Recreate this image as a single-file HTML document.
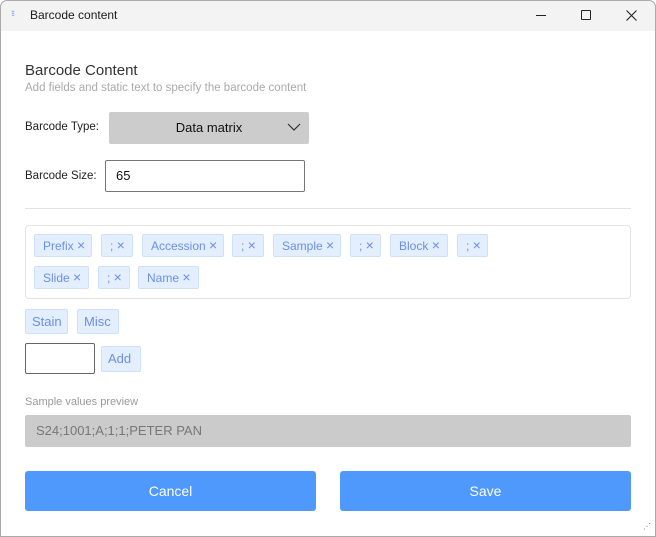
<!DOCTYPE html>
<html><head><style>
*{box-sizing:border-box;margin:0;padding:0}
body{width:656px;height:537px;background:#fff;font-family:"Liberation Sans",sans-serif;position:relative;overflow:hidden}
.brd{position:absolute;left:0;top:0;width:656px;height:537px;border:1px solid #aaa;border-radius:7px 7px 0 0;pointer-events:none}
.tb{position:absolute;left:0;top:0;width:100%;height:31px;background:#f3f3f3;border-radius:7px 7px 0 0}
.a{position:absolute;white-space:nowrap}
.chip{position:absolute;height:23px;background:#e3eefe;border:1px solid #cfe0fb;border-radius:2px;color:#6b8fe8;font-size:12px;line-height:21px;padding-left:8px}
.chip b{font-weight:normal;font-size:14px}
.btn{position:absolute;background:#4f98fc;border-radius:3px;color:#fff;font-size:14px;text-align:center;line-height:40px;height:40px;top:471px;width:291px}
</style></head><body>
<div class="tb"></div>
<div class="a" style="left:11px;top:10px;font-size:8px;color:#3a8ee8;line-height:8px;letter-spacing:-1px">⁝⁝</div>
<div class="a" style="left:30px;top:8px;font-size:12px;color:#1a1a1a">Barcode content</div>
<div class="a" style="left:536px;top:15px;width:10px;height:1px;background:#222"></div>
<div class="a" style="left:581px;top:10px;width:10px;height:10px;border:1px solid #222;border-radius:1px"></div>
<svg class="a" style="left:626px;top:10px" width="11" height="11"><path d="M0.5 0.5l10 10M10.5 0.5l-10 10" stroke="#222" stroke-width="1.1"/></svg>
<div class="a" style="left:25px;top:62px;font-size:15px;color:#333">Barcode Content</div>
<div class="a" style="left:25px;top:82px;font-size:11.5px;color:#aaa">Add fields and static text to specify the barcode content</div>
<div class="a" style="left:25px;top:121px;font-size:11.5px;color:#222">Barcode Type:</div>
<div class="a" style="left:109px;top:112px;width:200px;height:32px;background:#cccccc;border-radius:2px;font-size:13px;color:#111;text-align:center;line-height:32px">Data matrix</div>
<svg class="a" style="left:287px;top:123px" width="14" height="9"><path d="M1 1l6 6 6-6" stroke="#333" fill="none" stroke-width="1.2"/></svg>
<div class="a" style="left:25px;top:170px;font-size:11.5px;color:#222">Barcode Size:</div>
<div class="a" style="left:105px;top:160px;width:200px;height:32px;border:1px solid #777;border-radius:2px;font-size:13px;color:#111;line-height:30px;padding-left:10px">65</div>
<div class="a" style="left:25px;top:208px;width:606px;height:1px;background:#e2e2e2"></div>
<div class="a" style="left:25px;top:225px;width:606px;height:74px;border:1px solid #e3e3e3;border-radius:4px"></div>
<div class="chip" style="left:34px;top:234px;width:58px">Prefix <b>×</b></div>
<div class="chip" style="left:101px;top:234px;width:32px">; <b>×</b></div>
<div class="chip" style="left:142px;top:234px;width:82px">Accession <b>×</b></div>
<div class="chip" style="left:232px;top:234px;width:32px">; <b>×</b></div>
<div class="chip" style="left:273px;top:234px;width:68px">Sample <b>×</b></div>
<div class="chip" style="left:350px;top:234px;width:31px">; <b>×</b></div>
<div class="chip" style="left:390px;top:234px;width:58px">Block <b>×</b></div>
<div class="chip" style="left:457px;top:234px;width:31px">; <b>×</b></div>
<div class="chip" style="left:34px;top:266px;width:55px">Slide <b>×</b></div>
<div class="chip" style="left:98px;top:266px;width:32px">; <b>×</b></div>
<div class="chip" style="left:138px;top:266px;width:61px">Name <b>×</b></div>
<div class="chip" style="left:25px;top:309px;width:43px;height:25px;font-size:13px;line-height:23px;padding-left:6px">Stain</div>
<div class="chip" style="left:77px;top:309px;width:42px;height:25px;font-size:13px;line-height:23px;padding-left:6px">Misc</div>
<div class="a" style="left:25px;top:343px;width:70px;height:31px;border:1px solid #666;border-radius:2px"></div>
<div class="chip" style="left:101px;top:346px;width:40px;height:26px;font-size:13px;line-height:24px;padding-left:6px">Add</div>
<div class="a" style="left:25px;top:396px;font-size:11px;color:#999">Sample values preview</div>
<div class="a" style="left:25px;top:415px;width:606px;height:32px;background:#cbcbcb;border-radius:2px;font-size:13px;color:#777;line-height:32px;padding-left:11px">S24;1001;A;1;1;PETER PAN</div>
<div class="btn" style="left:25px">Cancel</div>
<div class="btn" style="left:340px">Save</div>
<div class="a" style="left:643px;top:522px;font-size:8px;color:#666">⋰</div>
<div class="brd"></div>
</body></html>
